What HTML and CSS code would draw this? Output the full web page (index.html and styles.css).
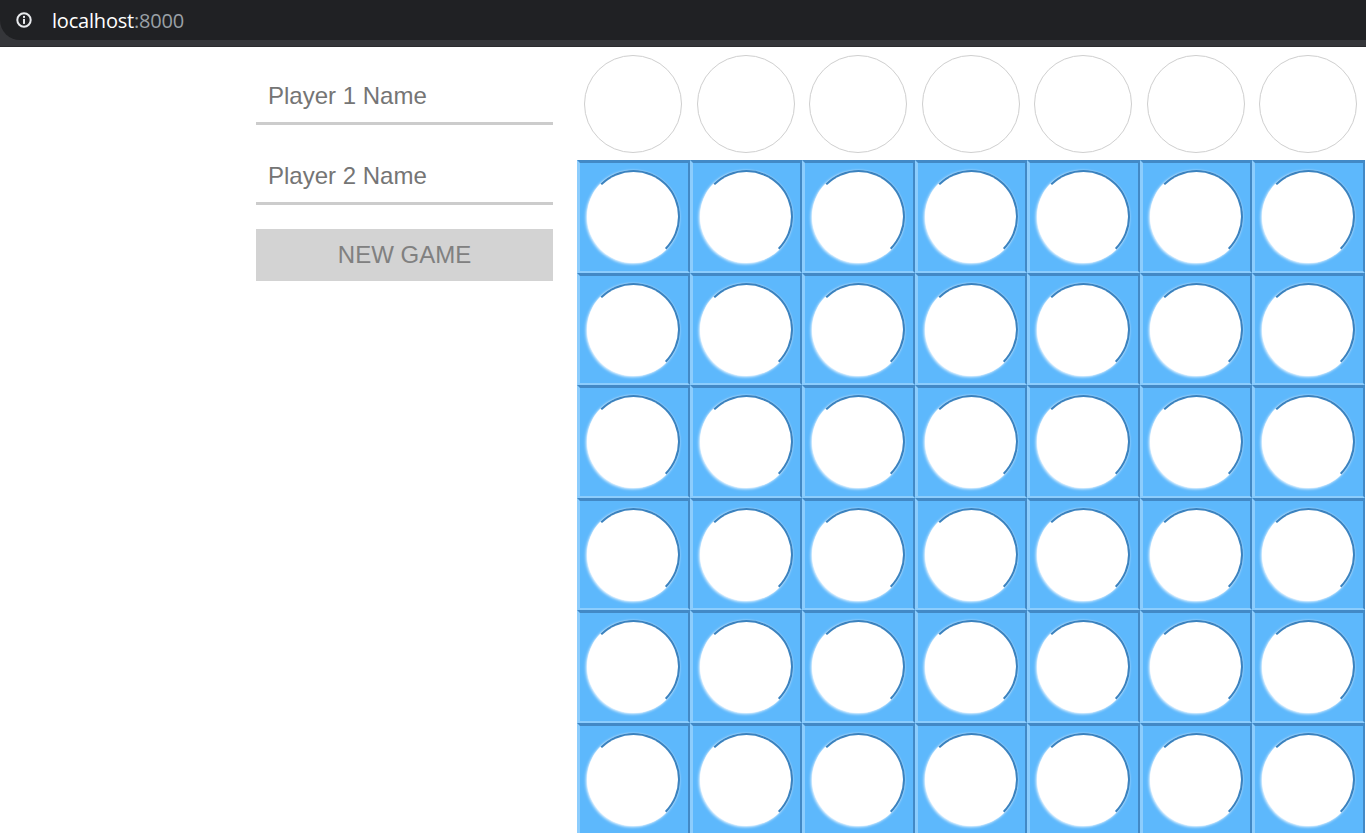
FILE: index.html
```html
<!DOCTYPE html>
<html lang="en">
<head>
<meta charset="utf-8">
<title>Connect Four</title>
<link rel="stylesheet" href="styles.css">
</head>
<body>
<header class="chrome">
  <div class="omnibox">
    <svg class="info" width="16" height="16" viewBox="0 0 16 16" aria-hidden="true">
      <circle cx="8" cy="8" r="6.7" fill="none" stroke="#e8eaed" stroke-width="2"/>
      <rect x="7" y="6.9" width="2" height="5" fill="#e8eaed"/>
      <rect x="7" y="3.9" width="2" height="2" fill="#e8eaed"/>
    </svg>
    <span class="url"><span class="host">localhost</span><span class="port">:8000</span></span>
  </div>
</header>
<main class="page">
  <aside class="panel">
    <input class="name" type="text" placeholder="Player 1 Name">
    <input class="name" type="text" placeholder="Player 2 Name">
    <button class="new-game" type="button">NEW GAME</button>
  </aside>
  <section class="game">
    <div class="drop-row">
      <div class="slot"><span class="ghost"></span></div>
      <div class="slot"><span class="ghost"></span></div>
      <div class="slot"><span class="ghost"></span></div>
      <div class="slot"><span class="ghost"></span></div>
      <div class="slot"><span class="ghost"></span></div>
      <div class="slot"><span class="ghost"></span></div>
      <div class="slot"><span class="ghost"></span></div>
    </div>
    <div class="board">
      <div class="cell"><span class="hole"></span></div><div class="cell"><span class="hole"></span></div><div class="cell"><span class="hole"></span></div><div class="cell"><span class="hole"></span></div><div class="cell"><span class="hole"></span></div><div class="cell"><span class="hole"></span></div><div class="cell"><span class="hole"></span></div>
      <div class="cell"><span class="hole"></span></div><div class="cell"><span class="hole"></span></div><div class="cell"><span class="hole"></span></div><div class="cell"><span class="hole"></span></div><div class="cell"><span class="hole"></span></div><div class="cell"><span class="hole"></span></div><div class="cell"><span class="hole"></span></div>
      <div class="cell"><span class="hole"></span></div><div class="cell"><span class="hole"></span></div><div class="cell"><span class="hole"></span></div><div class="cell"><span class="hole"></span></div><div class="cell"><span class="hole"></span></div><div class="cell"><span class="hole"></span></div><div class="cell"><span class="hole"></span></div>
      <div class="cell"><span class="hole"></span></div><div class="cell"><span class="hole"></span></div><div class="cell"><span class="hole"></span></div><div class="cell"><span class="hole"></span></div><div class="cell"><span class="hole"></span></div><div class="cell"><span class="hole"></span></div><div class="cell"><span class="hole"></span></div>
      <div class="cell"><span class="hole"></span></div><div class="cell"><span class="hole"></span></div><div class="cell"><span class="hole"></span></div><div class="cell"><span class="hole"></span></div><div class="cell"><span class="hole"></span></div><div class="cell"><span class="hole"></span></div><div class="cell"><span class="hole"></span></div>
      <div class="cell"><span class="hole"></span></div><div class="cell"><span class="hole"></span></div><div class="cell"><span class="hole"></span></div><div class="cell"><span class="hole"></span></div><div class="cell"><span class="hole"></span></div><div class="cell"><span class="hole"></span></div><div class="cell"><span class="hole"></span></div>
    </div>
  </section>
</main>
</body>
</html>
```
FILE: styles.css
```css
html, body {
  margin: 0;
  padding: 0;
  height: 100%;
  overflow: hidden;
  background: #ffffff;
  font-family: "Liberation Sans", Arial, sans-serif;
}

/* browser chrome strip */
.chrome {
  height: 47px;
  box-sizing: border-box;
  background: #35363a;
  border-bottom: 1px solid #2b2b2e;
}
.omnibox {
  height: 40px;
  background: #202124;
  border-radius: 0 0 0 20px;
  display: flex;
  align-items: center;
  padding-left: 16px;
  gap: 20px;
  font-family: "Open Sans", "Noto Sans", sans-serif;
  font-size: 20px;
  letter-spacing: -0.2px;
}
.info { flex: none; }
.host { color: #ffffff; }
.port { color: #9aa0a6; }

/* page */
.page {
  display: flex;
  align-items: flex-start;
  padding-left: 256px;
  gap: 24px;
}

.panel {
  width: 297px;
  flex: none;
  display: flex;
  flex-direction: column;
  gap: 24px;
  padding-top: 22px;
}
.name {
  height: 56px;
  box-sizing: border-box;
  border: none;
  border-bottom: 3px solid #cccccc;
  padding: 0 12px;
  margin: 0;
  font-family: "Liberation Sans", Arial, sans-serif;
  font-size: 24px;
  color: #333;
  outline: none;
  background: transparent;
}
.name::placeholder { color: #757575; }
.new-game {
  height: 52px;
  border: none;
  margin: 0;
  background: #d3d3d3;
  color: #808080;
  font-family: "Liberation Sans", Arial, sans-serif;
  font-size: 24px;
  padding: 0;
}

.game {
  flex: none;
  width: 787.5px;
}
.drop-row {
  display: grid;
  grid-template-columns: repeat(7, 112.5px);
  height: 113px;
}
.slot {
  display: flex;
  align-items: center;
  justify-content: center;
}
.ghost {
  width: 98px;
  height: 98px;
  box-sizing: border-box;
  border-radius: 50%;
  border: 1px solid #cfcfcf;
}

.board {
  display: grid;
  grid-template-columns: repeat(7, 112.5px);
  grid-auto-rows: 112.5px;
}
.cell {
  box-sizing: border-box;
  background: #5db8fc;
  border-top: 3px solid #4289c6;
  border-right: 2px solid #4289c6;
  border-bottom: 2px solid #8ccdfd;
  border-left: 3px solid #8ccdfd;
  display: flex;
  align-items: center;
  justify-content: center;
}
.hole {
  width: 93px;
  height: 93px;
  box-sizing: border-box;
  border-radius: 50%;
  background: #ffffff;
  border: 2px solid;
  border-color: #3a82bf #3a82bf transparent transparent;
  box-shadow: -1px 1px 3px rgba(255, 255, 255, 0.95), 0 0 1px rgba(255, 255, 255, 0.6);
}
```
